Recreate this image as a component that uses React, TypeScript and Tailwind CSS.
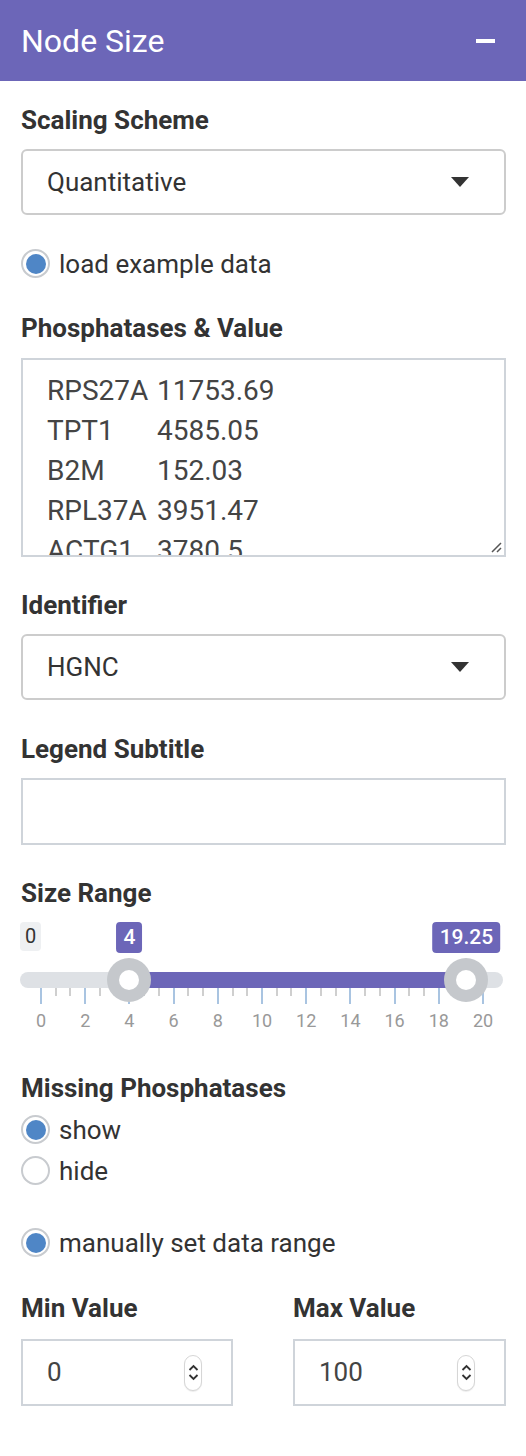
import React from "react";

const FONT = { fontFamily: "Roboto, 'Liberation Sans', sans-serif" };

const ROWS: [string, string][] = [
  ["RPS27A", "11753.69"],
  ["TPT1", "4585.05"],
  ["B2M", "152.03"],
  ["RPL37A", "3951.47"],
  ["ACTG1", "3780.5"],
];

// slider geometry: value 0 sits at x=41, 20 at x=483 (relative to page)
const X0 = 20; // left of slider box
const pos = (v: number) => 41 - X0 + v * 22.1;

function Label({ children }: { children: React.ReactNode }) {
  return <p className="text-[26px] font-bold leading-[26px] text-[#333]">{children}</p>;
}

function Radio({ checked, label }: { checked: boolean; label: string }) {
  return (
    <label className="flex h-[29px] items-center gap-[9px] text-[26px] leading-none text-[#333]">
      <span className="grid size-[29px] shrink-0 place-items-center rounded-full border-2 border-[#c8cbcf] bg-white">
        {checked && <span className="size-[20px] rounded-full bg-[#4f86c6]" />}
      </span>
      {label}
    </label>
  );
}

function Select({ value }: { value: string }) {
  return (
    <div className="flex h-[66px] items-center justify-between rounded-[6px] border-2 border-[#cccccc] pl-[24px] pr-[35px] text-[26px] text-[#333]">
      <span>{value}</span>
      <svg width="18" height="10" viewBox="0 0 18 10">
        <path d="M0 0h18L9 10z" fill="#333" />
      </svg>
    </div>
  );
}

function Spinner() {
  return (
    <span className="flex h-[36px] w-[18px] flex-col items-center justify-center gap-[3px] rounded-full border border-[#d6d6d6] bg-white shadow-[0_1px_1px_rgba(0,0,0,0.08)]">
      <svg width="11" height="7" viewBox="0 0 11 7">
        <path d="M1.5 6l4-4 4 4" fill="none" stroke="#333" strokeWidth="1.8" />
      </svg>
      <svg width="11" height="7" viewBox="0 0 11 7">
        <path d="M1.5 1l4 4 4-4" fill="none" stroke="#333" strokeWidth="1.8" />
      </svg>
    </span>
  );
}

function NumberBox({ value }: { value: string }) {
  return (
    <div className="flex h-[67px] items-center justify-between border-2 border-[#cfd4da] pl-[24px] pr-[29px] text-[26px] text-[#444]">
      <span>{value}</span>
      <Spinner />
    </div>
  );
}

function RangeSlider({ lo, hi }: { lo: number; hi: number }) {
  const ticks = Array.from({ length: 31 }, (_, i) => i);
  return (
    <div className="relative h-[116px]">
      {/* min label */}
      <span className="absolute left-0 top-[2px] rounded-[4px] bg-[#eef0f2] px-[5px] text-[20px] leading-[29px] text-[#333]">
        0
      </span>
      {/* value bubbles */}
      <span
        className="absolute top-[2px] -translate-x-1/2 rounded-[4px] bg-[#6c66b8] px-[7px] text-[21px] font-medium leading-[31px] text-white"
        style={{ left: pos(lo) }}
      >
        {lo}
      </span>
      <span
        className="absolute top-[2px] -translate-x-1/2 rounded-[4px] bg-[#6c66b8] px-[7px] text-[21px] font-medium leading-[31px] text-white"
        style={{ left: pos(hi) }}
      >
        {hi}
      </span>
      {/* track */}
      <div className="absolute left-0 right-[3px] top-[52px] h-[16px] rounded-full bg-[#dee1e5]" />
      <div
        className="absolute top-[52px] h-[16px] bg-[#6c66b8]"
        style={{ left: pos(lo), width: pos(hi) - pos(lo) }}
      />
      {/* ticks */}
      {ticks.map((i) => {
        const major = i % 3 === 0;
        return (
          <span
            key={i}
            className={`absolute top-[68px] w-[2px] -translate-x-1/2 ${major ? "h-[16px] bg-[#a9c4e1]" : "h-[8px] bg-[#cfcfcf]"}`}
            style={{ left: pos((i * 2) / 3) }}
          />
        );
      })}
      {ticks
        .filter((i) => i % 3 === 0)
        .map((i) => (
          <span
            key={`l${i}`}
            className="absolute top-[92px] -translate-x-1/2 text-[18px] leading-none text-[#999]"
            style={{ left: pos((i * 2) / 3) }}
          >
            {(i * 2) / 3}
          </span>
        ))}
      {/* handles */}
      {[lo, hi].map((v) => (
        <span
          key={v}
          className="absolute top-[38px] grid size-[44px] -translate-x-1/2 place-items-center rounded-full bg-[#c5c8cc]"
          style={{ left: pos(v) }}
        >
          <span className="size-[20px] rounded-full bg-white" />
        </span>
      ))}
    </div>
  );
}

export default function App() {
  return (
    <div className="min-h-[1456px] w-[526px] bg-white" style={FONT}>
      <div className="flex h-[81px] items-center justify-between bg-[#6c66b8] pl-[21px] pr-[31px]">
        <h2 className="text-[32px] leading-none text-white">Node Size</h2>
        <span className="h-[4px] w-[19px] bg-white" />
      </div>

      <div className="flex flex-col pl-[21px] pr-[20px]">
        <div className="mt-[26px]">
          <Label>Scaling Scheme</Label>
        </div>
        <div className="mt-[16px]">
          <Select value="Quantitative" />
        </div>

        <div className="mt-[34px]">
          <Radio checked label="load example data" />
        </div>

        <div className="mt-[37px]">
          <Label>Phosphatases &amp; Value</Label>
        </div>
        <div className="relative mt-[17px] h-[199px] overflow-hidden border-2 border-[#cfd4da] pl-[24px] pt-[11px] text-[28px] leading-[40px] text-[#444]">
          {ROWS.map(([g, v]) => (
            <div key={g} className="flex">
              <span className="w-[110px]">{g}</span>
              <span>{v}</span>
            </div>
          ))}
          <svg className="absolute bottom-[2px] right-[2px]" width="12" height="12" viewBox="0 0 12 12">
            <path d="M2 11L11 2M7 11l4-4" stroke="#555" strokeWidth="1.5" />
          </svg>
        </div>

        <div className="mt-[35px]">
          <Label>Identifier</Label>
        </div>
        <div className="mt-[16px]">
          <Select value="HGNC" />
        </div>

        <div className="mt-[36px]">
          <Label>Legend Subtitle</Label>
        </div>
        <div className="mt-[16px] h-[67px] border-2 border-[#cfd4da]" />

        <div className="mt-[35px]">
          <Label>Size Range</Label>
        </div>
        <div className="-ml-[1px] mt-[14px]">
          <RangeSlider lo={4} hi={19.25} />
        </div>

        <div className="mt-[39px]">
          <Label>Missing Phosphatases</Label>
        </div>
        <div className="mt-[14px] flex flex-col gap-[12px]">
          <Radio checked label="show" />
          <Radio checked={false} label="hide" />
        </div>

        <div className="mt-[43px]">
          <Radio checked label="manually set data range" />
        </div>

        <div className="mt-[38px] grid grid-cols-[212px_213px] gap-x-[60px]">
          <Label>Min Value</Label>
          <Label>Max Value</Label>
          <div className="mt-[18px]">
            <NumberBox value="0" />
          </div>
          <div className="mt-[18px]">
            <NumberBox value="100" />
          </div>
        </div>
      </div>
    </div>
  );
}
